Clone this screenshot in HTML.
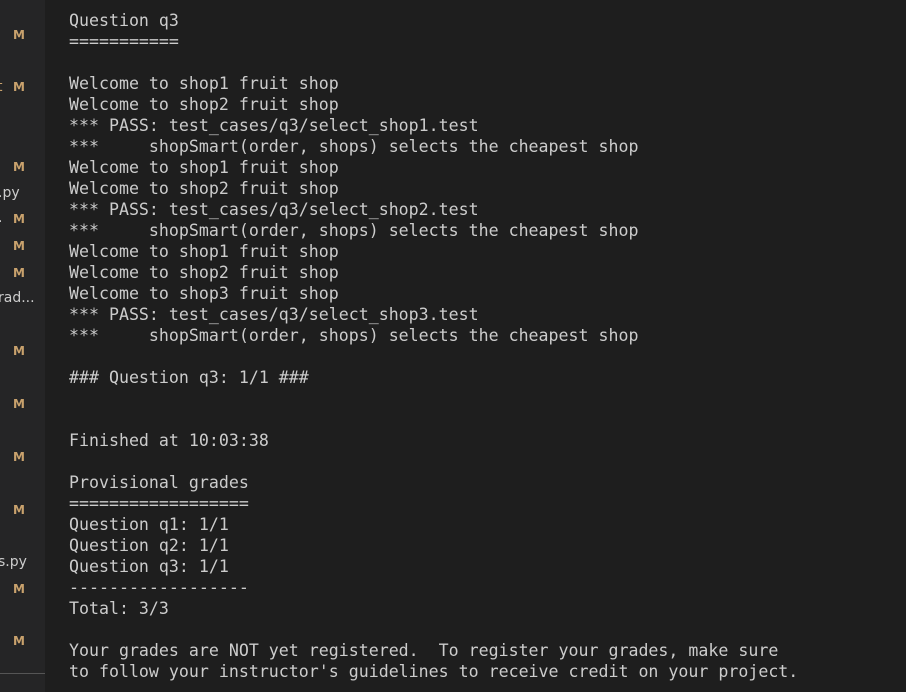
<!DOCTYPE html>
<html><head><style>
body{margin:0;width:906px;height:692px;background:#1e1e1e;overflow:hidden;position:relative;font-family:"DejaVu Sans Mono","Liberation Mono",monospace;}
#side{position:absolute;left:0;top:0;width:45px;height:692px;background:#252526;}
#side span{position:absolute;font-family:"DejaVu Sans","Liberation Sans",sans-serif;font-size:14px;line-height:16px;}
.m{color:#c9a26d;font-weight:bold;left:13px;font-size:12px!important;}
.f{color:#cccccc;}
#line{position:absolute;left:0;top:673px;width:45px;height:1px;background:#555;}
pre{position:absolute;left:69px;top:10px;margin:0;color:#cccccc;font-family:"DejaVu Sans Mono","Liberation Mono",monospace;font-size:16.6px;line-height:21px;}
</style></head><body>
<div id="side">
<span class="m" style="top:27px">M</span>
<span class="f" style="top:79px;left:-3px;color:#c9a26d">t</span>
<span class="m" style="top:79px">M</span>
<span class="m" style="top:159px">M</span>
<span class="f" style="top:185px;left:-2px">.py</span>
<span class="f" style="top:210px;left:-2px">.</span>
<span class="m" style="top:211px">M</span>
<span class="m" style="top:238px">M</span>
<span class="m" style="top:265px">M</span>
<span class="f" style="top:290px;left:-2px">rad...</span>
<span class="m" style="top:343px">M</span>
<span class="m" style="top:396px">M</span>
<span class="m" style="top:449px">M</span>
<span class="m" style="top:502px">M</span>
<span class="f" style="top:554px;left:-2px">s.py</span>
<span class="m" style="top:581px">M</span>
<span class="m" style="top:633px">M</span>
<div id="line"></div>
</div>
<pre>Question q3
===========

Welcome to shop1 fruit shop
Welcome to shop2 fruit shop
*** PASS: test_cases/q3/select_shop1.test
***     shopSmart(order, shops) selects the cheapest shop
Welcome to shop1 fruit shop
Welcome to shop2 fruit shop
*** PASS: test_cases/q3/select_shop2.test
***     shopSmart(order, shops) selects the cheapest shop
Welcome to shop1 fruit shop
Welcome to shop2 fruit shop
Welcome to shop3 fruit shop
*** PASS: test_cases/q3/select_shop3.test
***     shopSmart(order, shops) selects the cheapest shop

### Question q3: 1/1 ###


Finished at 10:03:38

Provisional grades
==================
Question q1: 1/1
Question q2: 1/1
Question q3: 1/1
------------------
Total: 3/3

Your grades are NOT yet registered.  To register your grades, make sure
to follow your instructor's guidelines to receive credit on your project.</pre>
</body></html>
